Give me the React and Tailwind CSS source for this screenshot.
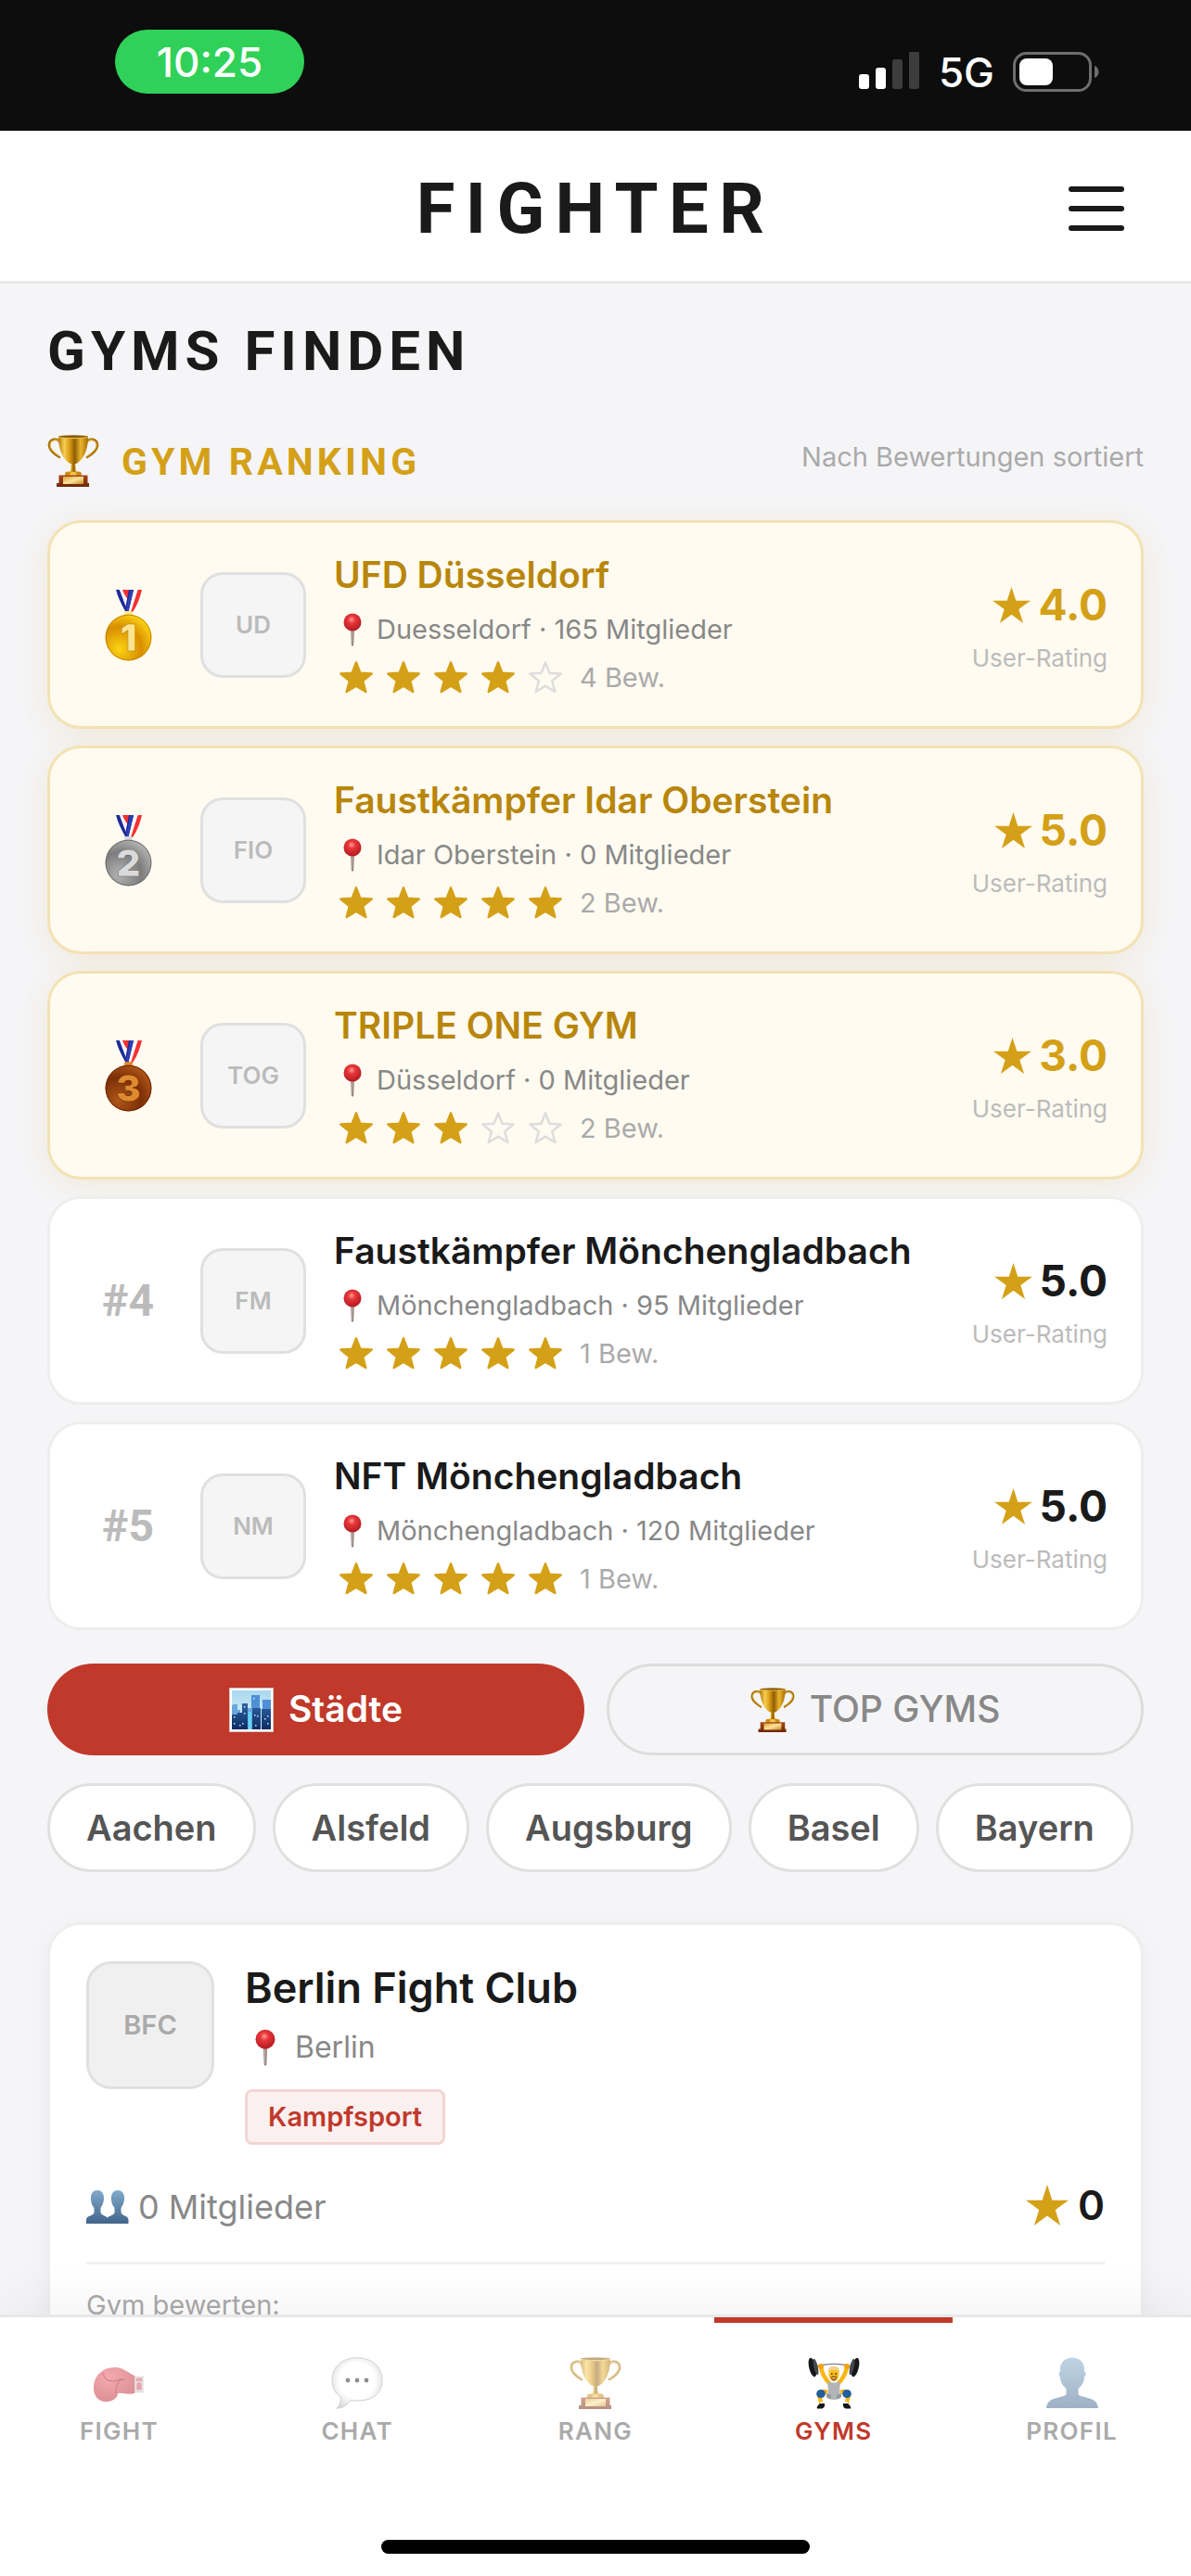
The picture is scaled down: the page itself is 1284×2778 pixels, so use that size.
import React from "react";

const GYMS = [
  { rank: 1, abbr: "UD", name: "UFD Düsseldorf", place: "Duesseldorf", members: 165, stars: 4, reviews: 4, rating: "4.0" },
  { rank: 2, abbr: "FIO", name: "Faustkämpfer Idar Oberstein", place: "Idar Oberstein", members: 0, stars: 5, reviews: 2, rating: "5.0" },
  { rank: 3, abbr: "TOG", name: "TRIPLE ONE GYM", place: "Düsseldorf", members: 0, stars: 3, reviews: 2, rating: "3.0" },
  { rank: 4, abbr: "FM", name: "Faustkämpfer Mönchengladbach", place: "Mönchengladbach", members: 95, stars: 5, reviews: 1, rating: "5.0" },
  { rank: 5, abbr: "NM", name: "NFT Mönchengladbach", place: "Mönchengladbach", members: 120, stars: 5, reviews: 1, rating: "5.0" },
];

const CITIES = ["Aachen", "Alsfeld", "Augsburg", "Basel", "Bayern"];

function Trophy({ className }) {
  return (
    <svg viewBox="0 0 56 56" className={className} aria-hidden="true">
      <defs>
        <linearGradient id="cup" x1="0" x2="1">
          <stop offset="0" stopColor="#b87a06" />
          <stop offset=".2" stopColor="#f6cf52" />
          <stop offset=".38" stopColor="#d99a12" />
          <stop offset=".55" stopColor="#8f5d05" />
          <stop offset=".75" stopColor="#eab52c" />
          <stop offset="1" stopColor="#a86c04" />
        </linearGradient>
        <linearGradient id="wood" x1="0" x2="0" y1="0" y2="1">
          <stop offset="0" stopColor="#a8481a" />
          <stop offset="1" stopColor="#6e2407" />
        </linearGradient>
        <linearGradient id="plate" x1="0" x2="1" y1="0" y2="1">
          <stop offset="0" stopColor="#d9a437" />
          <stop offset=".5" stopColor="#fbe39a" />
          <stop offset="1" stopColor="#c78b1f" />
        </linearGradient>
      </defs>
      <path d="M14 8C11 3 3 4 2 10c-.6 6 5 10 11 14" fill="none" stroke="#a8730a" strokeWidth="2.6" strokeLinecap="round" />
      <path d="M42 8c3-5 11-4 12 2 .6 6-5 10-11 14" fill="none" stroke="#a8730a" strokeWidth="2.6" strokeLinecap="round" />
      <path d="M14 8C11 4 4 5 3 10c-.4 5 4 9 10 13M42 8c3-4 10-3 11 2 .4 5-4 9-10 13" fill="none" stroke="#eab93c" strokeWidth="1" />
      <path d="M26 29h4l.6 9 4.400 4v3H21v-3l4.400-4z" fill="url(#cup)" />
      <ellipse cx="22.500" cy="42" rx="3.500" ry="2.600" fill="#c98d12" />
      <ellipse cx="33.500" cy="42" rx="3.500" ry="2.600" fill="#c98d12" />
      <ellipse cx="28" cy="42.500" rx="3.500" ry="2.800" fill="#f0c54a" />
      <path d="M12 1.500c0 15 5 25 12.500 29.500h7C39 26.500 44 16.500 44 1.500z" fill="url(#cup)" />
      <ellipse cx="28" cy="2" rx="16" ry="1.700" fill="#8b5a07" />
      <path d="M12 2c4 2.200 28 2.200 32 0" fill="none" stroke="#f4cf62" strokeWidth=".9" />
      <path d="M12.500 43.500h31V52h1.500v4H10v-4h2.500z" fill="url(#wood)" />
      <rect x="17" y="45" width="22" height="8" fill="url(#plate)" />
    </svg>
  );
}

const MEDALS = {
  1: { light: "#fbd414", dark: "#d98e00", rim: "#c68400", digit: "#fbe48c", edge: "#b87d05" },
  2: { light: "#b4b4b4", dark: "#7c7c7c", rim: "#6f6f6f", digit: "#dadada", edge: "#6a6a6a" },
  3: { light: "#b0571a", dark: "#7c2f05", rim: "#6b2703", digit: "#e08a30", edge: "#6a2a04" },
};

function Medal({ rank }) {
  const c = MEDALS[rank];
  const id = "medal" + rank;
  return (
    <svg viewBox="0 0 51 78" className="h-[78px] w-[51px]" role="img" aria-label={"Platz " + rank}>
      <defs>
        <radialGradient id={id} cx=".3" cy=".75" r=".8">
          <stop offset="0" stopColor={c.light} />
          <stop offset=".6" stopColor={c.dark} />
          <stop offset="1" stopColor={c.light} />
        </radialGradient>
      </defs>
      <path d="M18 1h14l-5 14z" fill="#f53131" />
      <path d="M12 1h4l9 24h-2.500C18 17 14 9 12 1z" fill="#1d2b98" />
      <path d="M16 1h3l7 19-1 5z" fill="#f4f4fa" />
      <path d="M40 1h-4.500L27 25h3C35 18 38 9 40 1z" fill="#f53131" />
      <path d="M35.500 1H31l-6 24h3z" fill="#fafafe" />
      <path d="M31 1h-5l-4 20 3 5z" fill="#1d2b98" />
      <path d="M31 1h-3.500L23 22l2.500 3z" fill="#2f40b4" />
      <rect x="21" y="24" width="9" height="5" rx="2" fill={c.digit} />
      <circle cx="25.500" cy="52.500" r="25" fill={"url(#" + id + ")"} />
      <circle cx="25.500" cy="52.500" r="24.300" fill="none" stroke={c.rim} strokeWidth="1" />
      <text
        x="25.500"
        y="67"
        textAnchor="middle"
        className="font-['Inter',sans-serif] text-[40px] font-black"
        fill={c.digit}
        stroke={c.edge}
        strokeWidth=".6"
      >
        {rank}
      </text>
    </svg>
  );
}

function Pin({ className }) {
  return (
    <svg viewBox="0 0 40 40" className={className} aria-hidden="true">
      <defs>
        <radialGradient id="pinhead" cx=".45" cy=".35" r=".6">
          <stop offset="0" stopColor="#ff9d94" />
          <stop offset=".35" stopColor="#e8373a" />
          <stop offset="1" stopColor="#b81d25" />
        </radialGradient>
      </defs>
      <path d="M18.200 20h3.600l-.6 16.500c-.3 1.500-2.100 1.500-2.400 0z" fill="#8d7b76" />
      <path d="M19.300 20h1l-.2 16h-.5z" fill="#d6c9c4" />
      <circle cx="20" cy="12" r="9.500" fill="url(#pinhead)" />
    </svg>
  );
}

function Skyline({ className }) {
  return (
    <svg viewBox="0 0 48 48" className={className} aria-hidden="true">
      <defs>
        <linearGradient id="sky" x1="0" x2="0" y1="0" y2="1">
          <stop offset="0" stopColor="#a9d8ee" />
          <stop offset="1" stopColor="#e6f6fc" />
        </linearGradient>
        <linearGradient id="tower" x1="0" x2="0" y1="0" y2="1">
          <stop offset="0" stopColor="#2f62a3" />
          <stop offset="1" stopColor="#0e2d63" />
        </linearGradient>
      </defs>
      <rect width="48" height="48" fill="#fff" />
      <rect x=".5" y=".5" width="47" height="47" fill="none" stroke="#d4c5c2" />
      <rect x="3" y="3" width="42" height="42" fill="url(#sky)" />
      <path d="M24 8h9v37h-9zM36 13h9v32h-9z" fill="#4f8fd6" />
      <path d="M4 18h5v6h3v21H3V20zM20 22h6v23h-6z" fill="#6aa6de" />
      <path d="M3 29h6v-2h5V17h6v28H3zM25 22h9v23h-9zM35 23h10v22H35z" fill="url(#tower)" />
      <rect x="20.500" y="26" width="3.500" height="19" fill="#62d4f2" />
      <path d="M5 31h1.500v1.500H5zM5 38h1.500v1.500H5zM16 20h1.500v1.500H16zM16 27h1.500v1.500H16zM11 40h1.500v1.500H11zM14 38h1.500v1.500H14zM27 29h1.500v1.500H27zM30 30h1.500v1.500H30zM28 40h1.500v1.500H28zM41 30h1.500v1.500H41zM38 33h1.500v1.500H38zM41 38h1.500v1.500H41zM26 11h1.500v1.500H26z" fill="#bfe6f7" />
    </svg>
  );
}

function People({ className }) {
  const bust = "M8.500 24v-5C3.500 13 3 0 12 0s8.500 13 3.500 19v5c1 4 8 3 8 8v4H0v-4c0-5 7.500-4 8.500-8z";
  return (
    <svg viewBox="0 0 46 36" className={className} aria-hidden="true">
      <defs>
        <linearGradient id="bust" x1="0" x2="0" y1="0" y2="1">
          <stop offset="0" stopColor="#80abcb" />
          <stop offset="1" stopColor="#41638a" />
        </linearGradient>
      </defs>
      <path d={bust} transform="translate(22 0)" fill="url(#bust)" />
      <path d={bust} fill="url(#bust)" />
    </svg>
  );
}

function Glove({ className }) {
  return (
    <svg viewBox="0 0 56 56" className={className} aria-hidden="true">
      <defs>
        <radialGradient id="glove" cx=".4" cy=".3" r=".8">
          <stop offset="0" stopColor="#f0555f" />
          <stop offset="1" stopColor="#b3202a" />
        </radialGradient>
      </defs>
      <path d="M1 31C2 20 10 11 24 11c9 0 14 6 21 9v19c-7 2-13-1-18 0 0 4-4 8-11 9C5 49 0 40 1 31z" fill="url(#glove)" />
      <path d="M11 17c1 6 4 9 11 9 4 0 6-3 12-2-6 0-9 4-9 15" fill="none" stroke="#9d1a24" strokeWidth="1.500" />
      <path d="M45 21h9v17h-9z" fill="#d94a54" />
      <path d="M46 20v19M54 20v19M46 22h8M46 37h8M46.500 30c0-5 7-5 7 0v6h-7z" fill="none" stroke="#c5cace" strokeWidth="1.600" />
    </svg>
  );
}

function Bubble({ className }) {
  return (
    <svg viewBox="0 0 56 56" className={className} aria-hidden="true">
      <defs>
        <radialGradient id="bubble" cx=".5" cy=".45" r=".6">
          <stop offset=".6" stopColor="#fff" />
          <stop offset="1" stopColor="#b5b5b5" />
        </radialGradient>
      </defs>
      <path d="M28 .8C44 .8 55 10 55 25S44 47 28 47c-2.500 0-5-.3-7-.8-3 5-9 9-15 9 4-4 4.500-8 4-12C4 38 1 33 1 25 1 10 12 .8 28 .8z" fill="url(#bubble)" stroke="#a5a5a5" strokeWidth="1" />
      <circle cx="18" cy="25" r="2.400" fill="#222" />
      <circle cx="28" cy="25" r="2.400" fill="#222" />
      <circle cx="38" cy="25" r="2.400" fill="#222" />
    </svg>
  );
}

function Lifter({ className }) {
  return (
    <svg viewBox="0 0 56 56" className={className} aria-hidden="true">
      <path d="M9 10c10-3.500 28-3.500 38 0" fill="none" stroke="#7b7f84" strokeWidth="1.400" />
      <path d="M14 11c1.500 7 5 13 9 17M42 11c-1.500 7-5 13-9 17" fill="none" stroke="#fbb615" strokeWidth="4.500" strokeLinecap="round" />
      <ellipse cx="5" cy="11" rx="3.800" ry="10.500" fill="#17181a" transform="rotate(-13 5 11)" />
      <ellipse cx="8.500" cy="10.500" rx="2.200" ry="9" fill="#44484d" transform="rotate(-13 8.500 10.500)" />
      <ellipse cx="51" cy="11" rx="3.800" ry="10.500" fill="#17181a" transform="rotate(13 51 11)" />
      <ellipse cx="47.500" cy="10.500" rx="2.200" ry="9" fill="#44484d" transform="rotate(13 47.500 10.500)" />
      <circle cx="14" cy="10" r="3" fill="#f3a310" />
      <circle cx="42" cy="10" r="3" fill="#f3a310" />
      <path d="M21 38c-4-2-8-1-9 3l3 11M35 38c4-2 8-1 9 3l-3 11" fill="none" stroke="#fbb615" strokeWidth="4.500" strokeLinejoin="round" />
      <path d="M21 26c3 2 11 2 14 0l-1 11 2 6c-4 4-12 4-16 0l2-6z" fill="#b3b4b8" />
      <path d="M20 39l5 2v4c-2 0-4-1-5-2zM36 39l-5 2v4c2 0 4-1 5-2z" fill="#95979b" />
      <ellipse cx="14" cy="39.500" rx="4.800" ry="4.500" fill="#225f9c" />
      <ellipse cx="42" cy="39.500" rx="4.800" ry="4.500" fill="#225f9c" />
      <path d="M13 48h4.500v2H13zM38.500 48H43v2h-4.500z" fill="#f4f4f4" />
      <path d="M13 50h5c.6 4-1.500 5.500-4 5.500h-4c-1-2 1.500-4 3-5.500zM43 50h-5c-.6 4 1.500 5.500 4 5.500h4c1-2-1.500-4-3-5.500z" fill="#15161a" />
      <ellipse cx="28" cy="18.500" rx="5.600" ry="7" fill="#fcc21b" />
      <path d="M22 17c-1-6 3-8 7-7 4 0 5.500 3 5 7l-2-3-8 0z" fill="#f3cf8c" />
      <path d="M24.500 21c2-1.500 5-1.500 7 0l-.8 3c-1.600 2.200-3.800 2.200-5.400 0z" fill="#a86c10" />
      <circle cx="25.800" cy="18" r=".9" fill="#4a2f0c" />
      <circle cx="30.200" cy="18" r=".9" fill="#4a2f0c" />
      <path d="M26.500 22.500h3" stroke="#fbe0c0" strokeWidth="1" />
    </svg>
  );
}

function Bust({ className }) {
  return (
    <svg viewBox="0 0 56 56" className={className} aria-hidden="true">
      <defs>
        <linearGradient id="profile" x1="0" x2="0" y1="0" y2="1">
          <stop offset="0" stopColor="#80abcb" />
          <stop offset="1" stopColor="#41638a" />
        </linearGradient>
      </defs>
      <path d="M21.500 40v-6C17 30 15 26 15 21c-2-1-2-5 0-5C14 6 20 .5 28 .5S42 6 41 16c2 0 2 4 0 5 0 5-2 9-6.500 13v6c3 5 20 1 21.500 15H0c1.500-14 18.500-10 21.500-15z" fill="url(#profile)" />
    </svg>
  );
}

function OutlineStar({ on }) {
  return (
    <svg viewBox="0 0 24 24" className={on ? "size-10 fill-[#d4a017] stroke-[#d4a017]" : "size-10 fill-none stroke-[#dddddd]"} strokeWidth="1.500" strokeLinejoin="round" aria-hidden="true">
      <path d="M12 2l2.600 6.800L22 9.270l-5.700 4.700L18.180 21.020 12 17.200l-6.180 3.820L7.700 13.970 2 9.270l7.400-.47z" />
    </svg>
  );
}

function SolidStar({ className }) {
  return (
    <svg viewBox="0 0 42 40" className={className} aria-hidden="true">
      <path d="M21 0l4.900 15.200H42L29 24.700 33.900 40 21 30.600 8.100 40 13 24.700 0 15.200h16.100z" fill="#d4a017" />
    </svg>
  );
}

function StatusBar() {
  return (
    <div className="flex h-[141px] shrink-0 items-start justify-between bg-[#0d0d0d] pr-24 pl-[124px] text-white">
      <div className="mt-8 flex h-[69px] w-[204px] items-center justify-center rounded-full bg-[#30d158] text-[44px] font-medium">10:25</div>
      <div className="mt-14 flex h-11 items-center gap-5">
        <svg viewBox="0 0 66 44" className="h-11 w-[66px]" aria-hidden="true">
          <rect x="0" y="24" width="11" height="16" rx="3" fill="#fff" />
          <rect x="18" y="17" width="11" height="23" rx="3" fill="#fff" />
          <rect x="36" y="8" width="11" height="32" rx="3" fill="#3d3d3d" />
          <rect x="54" y="-1" width="11" height="41" rx="3" fill="#3d3d3d" />
        </svg>
        <span className="text-[44px] leading-none font-medium">5G</span>
        <svg viewBox="0 0 96 44" className="h-11 w-24" aria-hidden="true">
          <rect x="1.500" y="1.500" width="82" height="40" rx="13" fill="none" stroke="#6e6e6e" strokeWidth="3" />
          <rect x="7" y="7" width="36" height="29" rx="8" fill="#fff" />
          <path d="M88 15c6 2 6 11 0 13z" fill="#6e6e6e" />
        </svg>
      </div>
    </div>
  );
}

function Rating({ value, gold }) {
  return (
    <div className="flex shrink-0 flex-col items-end">
      <div className={gold ? "flex items-center gap-2 text-[46px] leading-[58px] font-bold text-[#d4a017]" : "flex items-center gap-2 text-[46px] leading-[58px] font-bold text-[#1a1a1a]"}>
        <SolidStar className="h-[39px] w-[41px]" />
        {value}
      </div>
      <div className="mt-[15px] text-[26px] leading-7 text-[#bbbbbb]">User-Rating</div>
    </div>
  );
}

function GymRow({ gym }) {
  const gold = gym.rank <= 3;
  return (
    <li
      className={
        gold
          ? "flex items-center rounded-[36px] border-3 border-[#f3e2b3] bg-[#fffbf0] px-9 py-[30px] shadow-[0_6px_36px_rgba(212,160,23,0.12)]"
          : "flex items-center rounded-[36px] border-3 border-[#eeeeee] bg-white px-9 py-[30px]"
      }
    >
      <div className="flex w-24 shrink-0 justify-center font-['Roboto',sans-serif] text-5xl font-bold text-[#bbbbbb]">
        {gold ? <Medal rank={gym.rank} /> : "#" + gym.rank}
      </div>
      <div className="ml-[30px] flex size-[114px] shrink-0 items-center justify-center rounded-3xl border-3 border-[#e0e0e0] bg-[#f5f5f5] text-[26px] font-semibold text-[#bbbbbb]">
        {gym.abbr}
      </div>
      <div className="ml-[30px] min-w-0 flex-1">
        <h3 className={gold ? "text-[39px] leading-[51px] font-semibold whitespace-nowrap text-[#b8860b]" : "text-[39px] leading-[51px] font-semibold whitespace-nowrap text-[#1a1a1a]"}>
          {gym.name}
        </h3>
        <p className="mt-3 flex items-center gap-1.5 text-[29px] leading-[44px] whitespace-nowrap text-[#888888]">
          <Pin className="size-10" />
          {gym.place} · {gym.members} Mitglieder
        </p>
        <div className="mt-2 flex h-11 items-center gap-[3px]">
          {[1, 2, 3, 4, 5].map((n) => (
            <span key={n} className="flex w-12 justify-center">
              <OutlineStar on={n <= gym.stars} />
            </span>
          ))}
          <span className="ml-2.5 text-[29px] text-[#aaaaaa]">{gym.reviews} Bew.</span>
        </div>
      </div>
      <Rating value={gym.rating} gold={gold} />
    </li>
  );
}

const TABS = [
  { label: "FIGHT", Icon: Glove },
  { label: "CHAT", Icon: Bubble },
  { label: "RANG", Icon: Trophy },
  { label: "GYMS", Icon: Lifter, active: true },
  { label: "PROFIL", Icon: Bust },
];

export default function App() {
  return (
    <div className="flex h-screen flex-col overflow-hidden bg-[#f5f5f7] font-['Inter','Liberation_Sans',sans-serif]">
      <StatusBar />
      <header className="grid h-[165px] shrink-0 grid-cols-[1fr_auto_1fr] items-center border-b-3 border-[#e8e8e8] bg-white px-[72px] pt-1.5">
        <div className="col-start-2 font-['Roboto',sans-serif] text-[76px] leading-none font-bold tracking-[0.15em] text-[#1a1a1a]">FIGHTER</div>
        <button type="button" aria-label="Menü" className="flex w-15 flex-col gap-[15px] justify-self-end">
          <span className="h-1.5 rounded-full bg-[#1a1a1a]" />
          <span className="h-1.5 rounded-full bg-[#1a1a1a]" />
          <span className="h-1.5 rounded-full bg-[#1a1a1a]" />
        </button>
      </header>

      <main className="min-h-0 flex-1 overflow-hidden px-[51px] pt-[43px]">
        <h1 className="font-['Roboto',sans-serif] text-[60px] leading-[60px] font-bold tracking-widest text-[#1a1a1a]">GYMS FINDEN</h1>
        <div className="mt-[58px] mb-[34px] flex h-[60px] items-center">
          <Trophy className="size-14" />
          <h2 className="ml-6 pt-0.5 font-['Roboto',sans-serif] text-[41px] leading-[60px] font-bold tracking-widest text-[#d4a017]">GYM RANKING</h2>
          <p className="ml-auto pb-2 text-[29px] text-[#aaaaaa]">Nach Bewertungen sortiert</p>
        </div>

        <ol className="flex flex-col gap-[18px]">
          {GYMS.map((gym) => (
            <GymRow key={gym.rank} gym={gym} />
          ))}
        </ol>

        <div className="mt-9 grid h-[99px] grid-cols-2 gap-6 text-[39px]">
          <button type="button" className="flex items-center justify-center gap-4 rounded-full bg-[#c0392b] font-semibold text-white">
            <Skyline className="size-12" />
            Städte
          </button>
          <button type="button" className="flex items-center justify-center gap-4 rounded-full border-3 border-[#dddddd] font-medium text-[#888888]">
            <Trophy className="size-12" />
            TOP GYMS
          </button>
        </div>

        <div className="mt-[30px] flex gap-[18px]">
          {CITIES.map((city) => (
            <button key={city} type="button" className="h-24 shrink-0 rounded-full border-3 border-[#e0e0e0] bg-white px-[39px] text-[38px] font-semibold text-[#555555]">
              {city}
            </button>
          ))}
        </div>

        <article className="mt-[54px] rounded-[36px] border-3 border-[#eeeeee] bg-white p-[39px] shadow-[0_6px_30px_rgba(0,0,0,0.04)]">
          <div className="flex gap-[33px]">
            <div className="flex size-[138px] shrink-0 items-center justify-center rounded-[27px] border-3 border-[#e0e0e0] bg-[#f0f0f0] text-[29px] font-semibold text-[#aaaaaa]">BFC</div>
            <div>
              <h3 className="text-[45px] leading-[58px] font-semibold text-[#1a1a1a]">Berlin Fight Club</h3>
              <p className="mt-3 flex items-center gap-2.5 text-[32px] leading-[46px] text-[#888888]">
                <Pin className="size-11" />
                Berlin
              </p>
              <span className="mt-[22px] inline-flex h-[60px] items-center rounded-lg border-3 border-[#f3d5d3] bg-[#fbf0f0] px-[22px] text-[29px] font-semibold text-[#c0392b]">Kampfsport</span>
            </div>
          </div>
          <div className="mt-[37px] flex h-[60px] items-center justify-between">
            <span className="flex items-center gap-2.5 text-4xl text-[#888888]">
              <People className="h-9 w-[46px]" />
              0 Mitglieder
            </span>
            <span className="flex items-center gap-2.5 pb-1 text-[44px] font-semibold text-[#1a1a1a]">
              <SolidStar className="h-11 w-[46px]" />
              0
            </span>
          </div>
          <p className="mt-[29px] border-t-3 border-[#f0f0f0] pt-[22px] text-[29px] leading-[44px] text-[#aaaaaa]">Gym bewerten:</p>
          <div className="mt-4 h-24" />
        </article>
      </main>

      <nav className="relative z-10 flex h-[282px] shrink-0 flex-col border-t-3 border-[#e8e8e8] bg-white shadow-[0_-6px_60px_rgba(0,0,0,0.06)]">
        <div className="grid grid-cols-5">
          {TABS.map(({ label, Icon, active }) => (
            <a
              key={label}
              href={"#" + label.toLowerCase()}
              aria-current={active ? "page" : undefined}
              className={
                active
                  ? "flex flex-col items-center border-t-6 border-[#c0392b] pt-[37px] text-[#c0392b]"
                  : "flex flex-col items-center border-t-6 border-transparent pt-[37px] text-[#aaaaaa]"
              }
            >
              <Icon className={active ? "size-14" : "size-14 opacity-50"} />
              <span className="mt-2 text-[26px] leading-8 font-semibold tracking-wider">{label}</span>
            </a>
          ))}
        </div>
        <div className="mx-auto mt-auto mb-6 h-[15px] w-[36%] rounded-full bg-black" />
      </nav>
    </div>
  );
}
